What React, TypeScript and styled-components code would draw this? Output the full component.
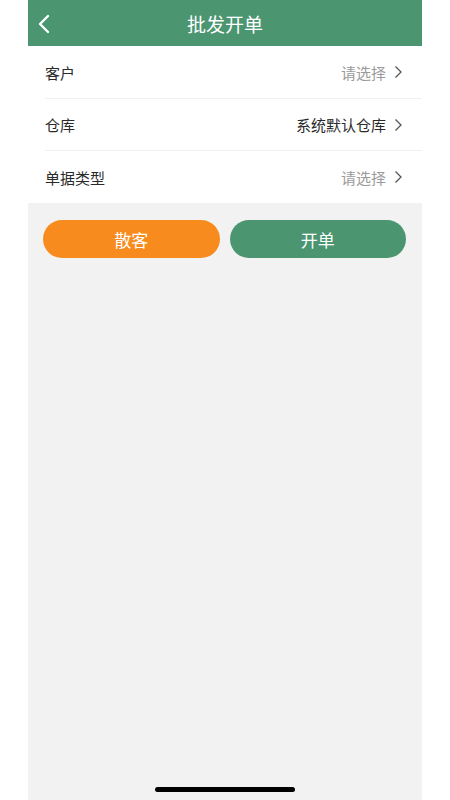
import React from "react";
import styled, { createGlobalStyle } from "styled-components";

const GlobalStyle = createGlobalStyle`
  html, body {
    margin: 0;
    padding: 0;
    background: #ffffff;
    font-family: "Noto Sans CJK SC", "Noto Sans", sans-serif;
  }
`;

const Screen = styled.div`
  width: 394px;
  height: 800px;
  margin: 0 auto;
  background: #f2f2f2;
  display: flex;
  flex-direction: column;
  position: relative;
`;

const Header = styled.div`
  height: 46px;
  background: #4b9571;
  display: flex;
  align-items: center;
  justify-content: center;
  position: relative;
  flex-shrink: 0;
`;

const BackButton = styled.div`
  position: absolute;
  left: 6px;
  top: 13px;
  width: 20px;
  height: 22px;
  display: flex;
  align-items: center;
  justify-content: center;
`;

const Title = styled.div`
  color: #ffffff;
  font-size: 19px;
  line-height: 1;
`;

const List = styled.div`
  background: #ffffff;
  padding-left: 17px;
`;

const Row = styled.div<{ $first?: boolean; $last?: boolean }>`
  height: ${(p) => (p.$first ? 53 : 52)}px;
  display: flex;
  align-items: center;
  justify-content: space-between;
  padding-right: 19px;
  border-bottom: ${(p) => (p.$last ? "none" : "1px solid #f0f0f0")};
  box-sizing: border-box;
`;

const Label = styled.span`
  font-size: 15px;
  color: #2a2a2a;
`;

const Value = styled.span<{ $muted?: boolean }>`
  display: flex;
  align-items: center;
  gap: 8px;
  font-size: 15px;
  color: ${(p) => (p.$muted ? "#9a9a9a" : "#2a2a2a")};
`;

const Actions = styled.div`
  display: flex;
  gap: 10px;
  padding: 17px 16px 0 15px;
`;

const PillButton = styled.div<{ $tone: "orange" | "green" }>`
  flex: 1;
  height: 38px;
  border-radius: 19px;
  background: ${(p) => (p.$tone === "orange" ? "#f88b1e" : "#4b9571")};
  color: #ffffff;
  font-size: 17px;
  display: flex;
  align-items: center;
  justify-content: center;
`;

const HomeIndicator = styled.div`
  position: absolute;
  left: 127px;
  bottom: 8px;
  width: 140px;
  height: 5px;
  border-radius: 3px;
  background: #000000;
`;

const Chevron = () => (
  <svg width="9" height="14" viewBox="0 0 9 14">
    <path d="M1.5 1.5 L7 7 L1.5 12.5" fill="none" stroke="#555" strokeWidth="1.3" />
  </svg>
);

const rows = [
  { label: "客户", value: "请选择", muted: true },
  { label: "仓库", value: "系统默认仓库", muted: false },
  { label: "单据类型", value: "请选择", muted: true },
];

export default function App() {
  return (
    <>
      <GlobalStyle />
      <Screen>
        <Header>
          <BackButton>
            <svg width="14" height="20" viewBox="0 0 14 20">
              <path d="M11 2 L3 10 L11 18" fill="none" stroke="#fff" strokeWidth="2.4" strokeLinecap="round" strokeLinejoin="round" />
            </svg>
          </BackButton>
          <Title>批发开单</Title>
        </Header>
        <List>
          {rows.map((r, i) => (
            <Row key={r.label} $first={i === 0} $last={i === rows.length - 1}>
              <Label>{r.label}</Label>
              <Value $muted={r.muted}>
                {r.value}
                <Chevron />
              </Value>
            </Row>
          ))}
        </List>
        <Actions>
          <PillButton $tone="orange">散客</PillButton>
          <PillButton $tone="green">开单</PillButton>
        </Actions>
        <HomeIndicator />
      </Screen>
    </>
  );
}
